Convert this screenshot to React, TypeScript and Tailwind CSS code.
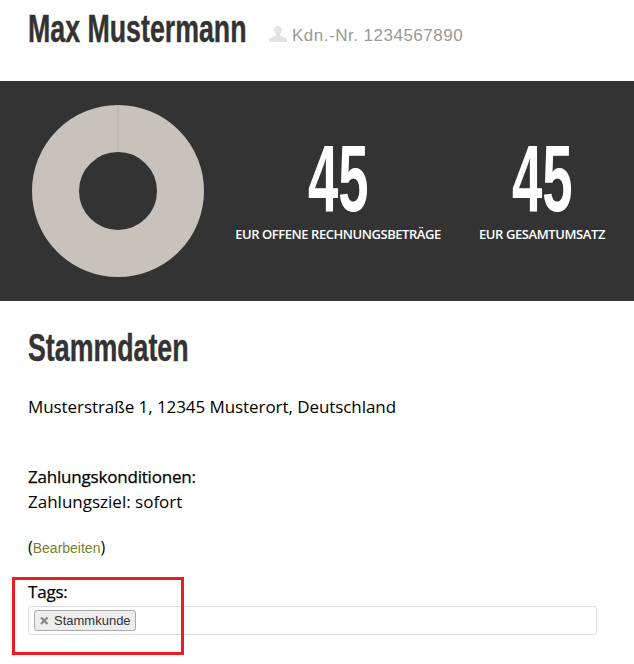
function Stat({ label, className, labelClass }: { label: string; className: string; labelClass: string }) {
  return (
    <div className={`flex flex-col items-center ${className}`}>
      <div className="font-['Liberation_Sans',sans-serif] font-bold text-white text-[94px] leading-[80px] h-[80px] scale-x-[0.58] -translate-y-[1px]">
        45
      </div>
      <div className={`font-['Open_Sans',sans-serif] font-semibold text-white text-[13px] leading-[16px] mt-[6px] whitespace-nowrap ${labelClass}`}>
        {label}
      </div>
    </div>
  );
}

export default function App() {
  return (
    <div className="relative w-[634px] h-[664px] bg-white overflow-hidden font-['Open_Sans',sans-serif]">
      {/* header */}
      <div className="h-[81px] pl-[28px] pt-[7px] flex items-start">
        <h1 className="font-['Liberation_Sans',sans-serif] font-bold text-[#333333] text-[38px] leading-[44px] w-[218px] origin-left scale-x-[0.704] [-webkit-text-stroke:0.4px_#333333] whitespace-nowrap">
          Max Mustermann
        </h1>
        <div className="flex items-center ml-[23px] mt-[16px] h-[24px]">
          <svg width="18" height="16" viewBox="0 0 18 16" className="shrink-0 -translate-y-[1px]">
            <path d="M9 0c2.400 0 3.800 1.700 3.800 4 0 1.800-.8 3.400-1.800 4.300v1.300c.6.8 5.400 1.600 6.500 3.200.3.5.5 1.400.5 3.200H0c0-1.800.2-2.700.5-3.200 1.100-1.600 5.900-2.400 6.500-3.200V8.300C6 7.400 5.200 5.800 5.200 4 5.200 1.700 6.600 0 9 0z" fill="#e3e3e3" />
          </svg>
          <span className="ml-[5px] font-['Liberation_Sans',sans-serif] text-[#999999] text-[17px] leading-[24px] tracking-[0.5px] whitespace-nowrap translate-y-[1px]">
            Kdn.-Nr. 1234567890
          </span>
        </div>
      </div>

      {/* stats band */}
      <div className="h-[220px] bg-[#333333] flex items-start">
        <svg width="172" height="172" viewBox="0 0 172 172" className="ml-[32px] mt-[24px] shrink-0">
          <circle cx="86" cy="86" r="62.5" fill="none" stroke="#c7c2bb" strokeWidth="47" />
          <line x1="86" y1="0" x2="86" y2="47" stroke="#b5b0a9" strokeWidth="1" />
        </svg>
        <Stat label="EUR OFFENE RECHNUNGSBETRÄGE" labelClass="tracking-[-0.45px]" className="w-[206px] ml-[31px] mt-[59px]" />
        <Stat label="EUR GESAMTUMSATZ" labelClass="tracking-[-0.4px]" className="w-[126px] ml-[38px] mt-[59px]" />
      </div>

      {/* master data */}
      <div className="px-[28px] pt-[26px]">
        <h2 className="font-['Liberation_Sans',sans-serif] font-bold text-[#333333] text-[38px] leading-[42px] origin-left scale-x-[0.704] [-webkit-text-stroke:0.4px_#333333]">
          Stammdaten
        </h2>
        <p className="mt-[26px] text-[17px] leading-[24px] text-black tracking-[-0.07px]">
          Musterstraße 1, 12345 Musterort, Deutschland
        </p>
        <p className="mt-[46px] text-[17px] leading-[24px] text-black tracking-[-0.2px] [-webkit-text-stroke:0.25px_#000000]">Zahlungskonditionen:</p>
        <p className="text-[17px] leading-[25px] text-black">Zahlungsziel: sofort</p>
        <p className="mt-[23px] text-[14px] leading-[20px] text-black">
          <span className="text-[16px]">(</span>
          <span className="font-['Liberation_Sans',sans-serif] text-[#77802a]">Bearbeiten</span>
          <span className="text-[16px]">)</span>
        </p>
        <p className="mt-[22px] text-[17px] leading-[24px] text-black tracking-[-0.2px] [-webkit-text-stroke:0.25px_#000000]">Tags:</p>
        <div className="mt-[2px] w-[569px] h-[29px] border border-[#dddddd] rounded-[3px] pl-[5px] flex items-center">
          <div className="h-[21px] flex items-center rounded-[3px] border border-[#aaaaaa] bg-[#eeeeee] pl-[5px] pr-[4px]">
            <svg width="9" height="9" viewBox="0 0 9 9" className="shrink-0">
              <path d="M1 1.500 L7.500 8 M7.500 1.500 L1 8" stroke="#888888" strokeWidth="2.200" />
            </svg>
            <span className="ml-[5px] font-['Liberation_Sans',sans-serif] text-[13px] leading-[16px] text-[#333333] whitespace-nowrap">
              Stammkunde
            </span>
          </div>
        </div>
      </div>

      {/* highlight box */}
      <div className="absolute left-[12px] top-[577px] w-[172px] h-[78px] border-[3px] border-[#ed1c24]" />
    </div>
  );
}
